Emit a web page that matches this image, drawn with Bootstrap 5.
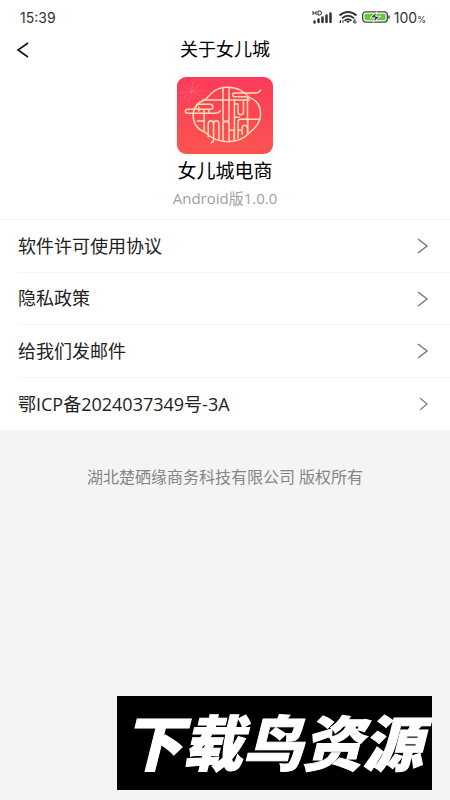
<!DOCTYPE html>
<html lang="zh-CN">
<head>
<meta charset="utf-8">
<meta name="viewport" content="width=device-width, initial-scale=1">
<title>关于女儿城</title>
<link href="https://cdn.jsdelivr.net/npm/bootstrap@5.3.0/dist/css/bootstrap.min.css" rel="stylesheet">
<style>
  body { font-family: "Open Sans", "Noto Sans CJK SC", sans-serif; background: #f4f4f4; color: #222; }
  svg { display: block; flex: none; }
  .status-bar { height: 34px; padding: 0 24px 0 20px; color: #333; }
  .clock { font-size: 14px; font-family: Inter, "Noto Sans", sans-serif; font-weight: 400; }
  .percent { font-size: 9px; }
  .top-bar { display: grid; grid-template-columns: 48px 1fr 48px; height: 32px; }
  .top-bar h1 { font-size: 18px; font-weight: 400; color: #000; }
  .back { padding: 0 0 0 16px; }
  .brand { padding: 11px 0 9px; }
  .brand h2 { font-size: 19px; line-height: 24px; font-weight: 400; color: #000; margin: 5px 0 3px; }
  .version { font-size: 15px; line-height: 24px; color: #a0a0a0; }
  .entries { border-top: 1px solid #f4f4f4; padding-left: 18px; }
  .entry { height: 53px; padding: 0 21px 0 0; font-size: 18px; color: #222; border-bottom: 1px solid #f4f4f4; }
  .entry:nth-child(even) { height: 52px; }
  .entry:last-child { border-bottom: 0; }
  .copyright { padding-top: 35px; font-size: 16px; line-height: 24px; color: #858585; }
  .watermark { right: 4%; bottom: 10px; width: 70%; height: 94px; padding-right: 4px; background: #000; color: #fff; font-size: 60px; font-weight: 900; font-style: italic; line-height: 1; -webkit-text-stroke: 1px #fff; }
</style>
<script src="https://cdn.jsdelivr.net/npm/bootstrap@5.3.0/dist/js/bootstrap.bundle.min.js"></script>
</head>
<body class="position-relative min-vh-100">
<div class="bg-white">
  <div class="status-bar d-flex align-items-center justify-content-between">
    <span class="clock">15:39</span>
    <div class="d-flex align-items-center gap-1">
      <svg width="22" height="14" viewBox="0 0 22 14" role="img" aria-label="HD 信号">
        <path d="M1 1v4M4 1v4M1 3h3M6 1v4h1.500q2 0 2-2t-2-2z" fill="none" stroke="#333" stroke-width="1"/>
        <path d="M2.500 11.500v1M6.500 9.500v2.500M10.500 7.500v4.500M14.500 5.500v6.500M18.500 3.500v8.500" fill="none" stroke="#333" stroke-width="2.500" stroke-linecap="round"/>
      </svg>
      <svg width="20" height="14" viewBox="0 0 20 14" role="img" aria-label="Wi-Fi 6">
        <path d="M1.500 5.500Q10-1.500 18.500 5.500M4 8.300Q10 3.200 16 8.300M6.500 10.800Q10 7.800 13.500 10.800" fill="none" stroke="#333" stroke-width="1.800"/>
        <path d="M8.300 11.300Q10 10 11.700 11.300L10 13.200z" fill="#333"/>
        <path d="M2.500 10v3M1 11.500l1.500 1.500M5 13v-3" fill="none" stroke="#333"/>
        <path d="M17.500 9q-2 1-2 2.700t1.700 1.400q1.400-.300 1-1.500t-2.500-.200" fill="none" stroke="#333"/>
      </svg>
      <svg width="28" height="12" viewBox="0 0 28 12" role="img" aria-label="充电中">
        <rect x=".7" y=".9" width="24.600" height="10.200" rx="3" fill="#fff" stroke="#444" stroke-width="1.300"/>
        <rect x="2.500" y="2.700" width="21" height="6.600" rx="1.500" fill="#65c83b"/>
        <path d="M15 .8 8 6.800h4.700L11 11.300l7.500-6h-5z" fill="#333" stroke="#fff" stroke-width=".9"/>
        <path d="M27 4.500v3" stroke="#444" stroke-width="1.500"/>
      </svg>
      <span class="clock">100<span class="percent">%</span></span>
    </div>
  </div>

  <header class="top-bar align-items-center">
    <button type="button" class="btn border-0 back" aria-label="返回">
      <svg width="14" height="16" viewBox="0 0 14 16"><path d="M12 1 2 8l10 7" fill="none" stroke="#111" stroke-width="1.600"/></svg>
    </button>
    <h1 class="m-0 text-center">关于女儿城</h1>
  </header>

  <section class="brand text-center">
    <svg class="mx-auto" width="96" height="77" viewBox="24 22 286 231" preserveAspectRatio="none" role="img" aria-label="女儿城">
      <defs><linearGradient id="red" x1="0" y1="0" x2="0" y2="1"><stop offset="0" stop-color="#fc3a5b"/><stop offset="1" stop-color="#fc5450"/></linearGradient></defs>
      <rect x="24" y="22" width="286" height="231" rx="27" fill="url(#red)"/>
      <g fill="none" stroke="#ff7183" stroke-width="2" opacity=".65">
        <path d="M68 66 42 47M68 66 34 70M68 66 38 88M68 66 54 38M68 66 72 36M68 66 94 42M68 66 104 62M68 66 100 82M68 66 60 96"/>
      </g>
      <g fill="none" stroke="#fbdcae" stroke-width="4.500" stroke-linecap="round" stroke-linejoin="round">
        <path d="M128 70C142 57 158 53 174 53C205 53 222 64 239 83C261 91 273 109 273 132C273 159 259 174 242 187C225 207 201 216 175 216C148 216 127 207 108 188C86 180 72 162 72 137C72 113 87 97 108 90C116 84 120 76 128 70Z"/>
        <path d="M100 91H240M161 56V150M179 54V150M161 150q0 6 5 6h8q5 0 5-6"/>
        <path d="M81 112q0-8 8-8h33q9 0 9 8t-9 7H56q-7 0-7 6t7 6h79q13 0 18-8M89 112v13M104 119v12M119 119v12"/>
        <path d="M105 131v54M84 154h21M117 201v-38q0-10 8-10t8 10v49q0 5-7 8M133 163q0-10 8-10t8 10v49"/>
        <path d="M161 213v-50q0-9 9-9t9 9v50M179 182h15v27M195 91v61M195 103h11v24q0 8 8 8t8-8V92M234 82v75M210 143h-15v66M206 205v-49q0-7 7-7h58"/>
        <path d="M218 194v-18q0-9 8-9t8 9v17M235 149v39M206 182h12"/>
        <path d="M192 81q-6-11 4-11h61q13 0 15-9M192 81h36q8 0 8 7"/>
      </g>
    </svg>
    <h2>女儿城电商</h2>
    <div class="version">Android版1.0.0</div>
  </section>

  <nav class="entries list-group list-group-flush" aria-label="关于">
    <a href="#license" class="entry d-flex align-items-center justify-content-between text-decoration-none">软件许可使用协议
      <svg width="12" height="16" viewBox="0 0 12 16"><path d="M1 1 10 8l-9 7" fill="none" stroke="#777" stroke-width="1.500"/></svg></a>
    <a href="#privacy" class="entry d-flex align-items-center justify-content-between text-decoration-none">隐私政策
      <svg width="12" height="16" viewBox="0 0 12 16"><path d="M1 1 10 8l-9 7" fill="none" stroke="#777" stroke-width="1.500"/></svg></a>
    <a href="#mail" class="entry d-flex align-items-center justify-content-between text-decoration-none">给我们发邮件
      <svg width="12" height="16" viewBox="0 0 12 16"><path d="M1 1 10 8l-9 7" fill="none" stroke="#777" stroke-width="1.500"/></svg></a>
    <a href="#icp" class="entry d-flex align-items-center justify-content-between text-decoration-none">鄂ICP备2024037349号-3A
      <svg width="10" height="14" viewBox="0 0 10 14"><path d="M1 1 8 7l-7 6" fill="none" stroke="#888" stroke-width="1.400"/></svg></a>
  </nav>
</div>

<footer class="copyright text-center">湖北楚硒缘商务科技有限公司 版权所有</footer>
<div class="watermark position-absolute d-flex align-items-center justify-content-center text-nowrap">下载鸟资源</div>
</body>
</html>
